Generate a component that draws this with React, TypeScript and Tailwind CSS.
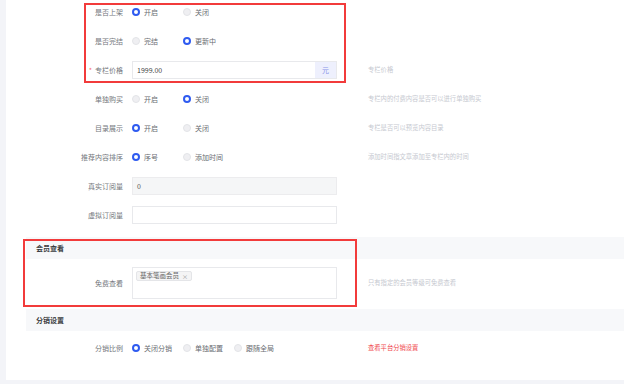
import React from "react";

type Opt = { label: string; checked?: boolean };

const Radio = ({ label, checked }: Opt) => (
  <div className="flex w-[51px] items-center gap-[4px]">
    {checked ? (
      <span className="h-[8px] w-[8px] shrink-0 rounded-full border-[2.5px] border-[#2f5bf0] bg-white" />
    ) : (
      <span className="h-[8px] w-[8px] shrink-0 rounded-full border border-[#e3e4e8] bg-[#efeff2]" />
    )}
    <span className="whitespace-nowrap text-[7px] text-[#6a6d72]">{label}</span>
  </div>
);

const Row = ({
  label,
  required,
  help,
  helpRed,
  children,
  className = "h-[18px] items-center",
}: {
  label: string;
  required?: boolean;
  help?: string;
  helpRed?: boolean;
  children: React.ReactNode;
  className?: string;
}) => (
  <div className={`flex ${className}`}>
    <div className="w-[117px] shrink-0 whitespace-nowrap text-right text-[7px] leading-[18px] text-[#74777c]">
      {required && <span className="mr-[3px] text-[#f56c6c]">*</span>}
      {label}
    </div>
    <div className="ml-[9px] flex w-[205px] shrink-0 items-center">{children}</div>
    {help && (
      <div
        className={`ml-[31px] whitespace-nowrap text-[6.3px] ${
          helpRed ? "text-[#f0484d]" : "text-[#c6c9d0]"
        }`}
      >
        {help}
      </div>
    )}
  </div>
);

const Band = ({ title }: { title: string }) => (
  <div className="ml-[20px] flex h-[22px] items-center bg-[#f7f8fa] pl-[10px] text-[7px] font-bold text-[#3a3c40]">
    {title}
  </div>
);

export default function App() {
  return (
    <div
      className="relative h-[384px] w-[624px] overflow-hidden bg-[#f3f4f8] pl-[6px]"
      style={{ fontFamily: '"Noto Sans CJK SC", "Noto Sans", sans-serif' }}
    >
      <div className="flex h-[380px] flex-col bg-white pt-[3px]">
        <div className="flex flex-col gap-[11px]">
          <Row label="是否上架">
            <Radio label="开启" checked />
            <Radio label="关闭" />
          </Row>
          <Row label="是否完结">
            <Radio label="完结" />
            <Radio label="更新中" checked />
          </Row>
          <Row label="专栏价格" required help="专栏价格">
            <div className="flex h-[18px] w-full border border-[#e8e9ec]">
              <div className="flex flex-1 items-center pl-[4px] text-[7px] text-[#444]">1999.00</div>
              <div className="flex w-[21px] items-center justify-center bg-[#eef0fd] text-[7px] text-[#8a94e8]">
                元
              </div>
            </div>
          </Row>
          <Row label="单独购买" help="专栏内的付费内容是否可以进行单独购买">
            <Radio label="开启" />
            <Radio label="关闭" checked />
          </Row>
          <Row label="目录展示" help="专栏是否可以预览内容目录">
            <Radio label="开启" checked />
            <Radio label="关闭" />
          </Row>
          <Row label="推荐内容排序" help="添加时间指文章添加至专栏内的时间">
            <Radio label="序号" checked />
            <Radio label="添加时间" />
          </Row>
          <Row label="真实订阅量">
            <div className="flex h-[18px] w-full items-center border border-[#ececee] bg-[#f5f6f7] pl-[4px] text-[7px] text-[#555]">
              0
            </div>
          </Row>
          <Row label="虚拟订阅量">
            <div className="h-[18px] w-full border border-[#e8e9ec] bg-white" />
          </Row>
        </div>

        <div className="mt-[13px]">
          <Band title="会员查看" />
        </div>
        <div className="mt-[8px]">
          <Row label="免费查看" help="只有指定的会员等级可免费查看" className="h-[32px] items-center">
            <div className="flex h-[32px] w-full items-start border border-[#e8e9ec] p-[3px]">
              <div className="flex h-[10px] items-center gap-[3px] rounded-[2px] border border-[#e4e5e8] bg-[#f4f4f5] px-[3px] text-[6.5px] text-[#666]">
                基本笔画会员<span className="text-[6px] text-[#999]">×</span>
              </div>
            </div>
          </Row>
        </div>

        <div className="mt-[10px]">
          <Band title="分销设置" />
        </div>
        <div className="mt-[8px]">
          <Row label="分销比例" help="查看平台分销设置" helpRed>
            <Radio label="关闭分销" checked />
            <Radio label="单独配置" />
            <Radio label="跟随全局" />
          </Row>
        </div>
      </div>

      <div className="pointer-events-none absolute left-[84px] top-[3px] h-[80px] w-[262px] border-2 border-[#f23b3b]" />
      <div className="pointer-events-none absolute left-[23px] top-[239px] h-[68px] w-[334px] border-2 border-[#f23b3b]" />
    </div>
  );
}
